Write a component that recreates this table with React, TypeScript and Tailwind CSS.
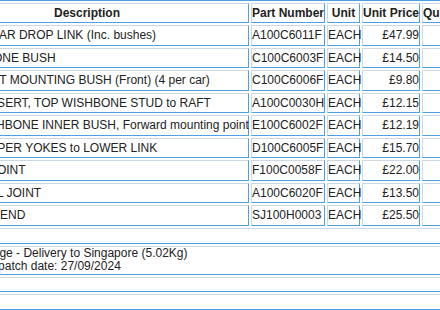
import React from 'react';

type Line = { desc: string; part: string; price: string };

const lines: Line[] = [
  { desc: 'ANTI ROLL BAR DROP LINK (Inc. bushes)', part: 'A100C6011F', price: '£47.99' },
  { desc: 'TOP WISHBONE BUSH', part: 'C100C6003F', price: '£14.50' },
  { desc: 'ENGINE RAFT MOUNTING BUSH (Front) (4 per car)', part: 'C100C6006F', price: '£9.80' },
  { desc: 'TAPERED INSERT, TOP WISHBONE STUD to RAFT', part: 'A100C0030H', price: '£12.15' },
  { desc: 'LOWER WISHBONE INNER BUSH, Forward mounting point', part: 'E100C6002F', price: '£12.19' },
  { desc: 'DAMPER UPPER YOKES to LOWER LINK', part: 'D100C6005F', price: '£15.70' },
  { desc: 'TOP ROSE JOINT', part: 'F100C0058F', price: '£22.00' },
  { desc: 'SWIVEL BALL JOINT', part: 'A100C6020F', price: '£13.50' },
  { desc: 'TRACK ROD END', part: 'SJ100H0003', price: '£25.50' },
];

// inset-style cell edge: pale top/left, blue bottom/right
const cell =
  'border border-t-[#cdd8e4] border-l-[#cdd8e4] border-b-[#4f9fe4] border-r-[#4f9fe4] p-0 whitespace-nowrap overflow-visible';

const App: React.FC = () => {
  return (
    <div
      className="w-[440px] h-[310px] overflow-hidden bg-white text-[#222] text-[12px]"
      style={{ fontFamily: '"Liberation Sans", Arial, sans-serif' }}
    >
      <table className="table-fixed border-separate border-spacing-[2px] w-[553px] -ml-[77px] -mt-[17px]">
        <colgroup>
          <col className="w-[324px]" />
          <col className="w-[74px]" />
          <col className="w-[33px]" />
          <col className="w-[58px]" />
          <col className="w-[52px]" />
        </colgroup>
        <tbody>
          <tr>
            <td colSpan={5} className={`${cell} h-[16px]`}></td>
          </tr>
          <tr className="font-bold">
            <th className={`${cell} h-[18px] text-center`}>Description</th>
            <th className={`${cell} h-[18px] text-left`}>Part Number</th>
            <th className={`${cell} h-[18px] text-center`}>Unit</th>
            <th className={`${cell} h-[18px] text-center`}>Unit Price</th>
            <th className={`${cell} h-[18px] text-left`}>Quantity</th>
          </tr>
          {lines.map((l) => (
            <tr key={l.part}>
              <td className={`${cell} h-[20.5px] text-left`}>{l.desc}</td>
              <td className={`${cell} h-[20.5px] text-left`}>{l.part}</td>
              <td className={`${cell} h-[20.5px] text-left`}>EACH</td>
              <td className={`${cell} h-[20.5px] text-right`}>{l.price}</td>
              <td className={`${cell} h-[20.5px]`}></td>
            </tr>
          ))}
          <tr>
            <td colSpan={5} className={`${cell} h-[16px]`}></td>
          </tr>
          <tr>
            <td colSpan={5} className={`${cell} h-[29px] text-left leading-[13.5px]`}>
              Shipping charge - Delivery to Singapore (5.02Kg)
              <br />
              Estimated dispatch date: 27/09/2024
            </td>
          </tr>
          <tr>
            <td colSpan={5} className={`${cell} h-[15px]`}></td>
          </tr>
          <tr>
            <td colSpan={5} className={`${cell} h-[16px]`}></td>
          </tr>
          <tr>
            <td colSpan={5} className={`${cell} h-[16px]`}></td>
          </tr>
        </tbody>
      </table>
    </div>
  );
};

export default App;
